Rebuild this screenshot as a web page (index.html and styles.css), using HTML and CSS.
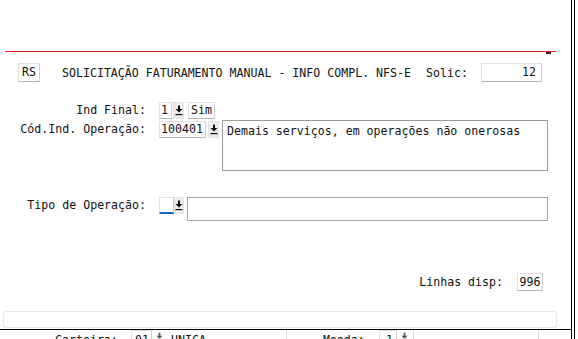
FILE: index.html
```html
<!DOCTYPE html>
<html lang="pt">
<head>
<meta charset="utf-8">
<link rel="stylesheet" href="styles.css">
</head>
<body>
<div class="frame">
  <div class="dialog">
    <div class="redline"></div>
    <div class="header">
      <div class="box rs">RS</div>
      <div class="title">SOLICITAÇÃO FATURAMENTO MANUAL - INFO COMPL. NFS-E</div>
      <div class="lbl solic-lbl">Solic:</div>
      <div class="box solic">12</div>
    </div>

    <div class="row r1">
      <div class="label">Ind Final:</div>
      <div class="box in-1">1</div>
      <div class="dd"><svg viewBox="0 0 8 11" width="8" height="11"><path d="M3 0.5h2v3.5h2.5L4 7.6 0.5 4H3z" fill="#111"/><rect x="0.5" y="9" width="7" height="1.2" fill="#111"/></svg></div>
      <div class="box in-sim">Sim</div>
    </div>

    <div class="row r2">
      <div class="label">Cód.Ind. Operação:</div>
      <div class="box in-cod">100401</div>
      <div class="dd dd2"><svg viewBox="0 0 8 11" width="8" height="11"><path d="M3 0.5h2v3.5h2.5L4 7.6 0.5 4H3z" fill="#111"/><rect x="0.5" y="9" width="7" height="1.2" fill="#111"/></svg></div>
      <div class="area">Demais serviços, em operações não onerosas</div>
    </div>

    <div class="row r3">
      <div class="label">Tipo de Operação:</div>
      <div class="box in-tipo"></div>
      <div class="dd dd3"><svg viewBox="0 0 8 11" width="8" height="11"><path d="M3 0.5h2v3.5h2.5L4 7.6 0.5 4H3z" fill="#111"/><rect x="0.5" y="9" width="7" height="1.2" fill="#111"/></svg></div>
      <div class="textbox"></div>
    </div>

    <div class="linhas">
      <div class="lbl">Linhas disp:</div>
      <div class="box in-linhas">996</div>
    </div>

    <div class="footbox"></div>
  </div>

  <div class="under">
    <div class="u-label">Carteira:</div>
    <div class="box u-01">01</div>
    <div class="u-dd"><svg viewBox="0 0 8 11" width="7" height="10"><path d="M3 0.5h2v3.5h2.5L4 7.6 0.5 4H3z" fill="#555"/><rect x="0.5" y="9" width="7" height="1.2" fill="#555"/></svg></div>
    <div class="u-text">UNICA</div>
    <div class="u-sep"></div>
    <div class="u-label u-moeda">Moeda:</div>
    <div class="box u-1">1</div>
    <div class="u-dd"><svg viewBox="0 0 8 11" width="7" height="10"><path d="M3 0.5h2v3.5h2.5L4 7.6 0.5 4H3z" fill="#555"/><rect x="0.5" y="9" width="7" height="1.2" fill="#555"/></svg></div>
    <div class="u-field"></div>
  </div>
</div>
</body>
</html>
```

FILE: styles.css
```css
html, body {
  margin: 0;
  padding: 0;
  background: #fff;
}
body {
  width: 578px;
  height: 339px;
  overflow: hidden;
  font-family: "DejaVu Sans Mono", "Liberation Mono", monospace;
  font-size: 11.6px;
  color: #111;
}
.frame {
  width: 571px;
  height: 339px;
  border-right: 4px double #000;
  overflow: hidden;
}
.dialog {
  box-sizing: border-box;
  height: 330px;
  border-bottom: 1px solid #000;
  display: flex;
  flex-direction: column;
}
.dialog > * {
  flex-shrink: 0;
}
.redline {
  position: relative;
  margin: 51px 0 0 5px;
  width: 551px;
  height: 1px;
  background: #ee1c1c;
}
.redline::after {
  content: "";
  position: absolute;
  left: 541px;
  top: 1px;
  width: 5px;
  height: 2px;
  background: #223;
}
.box {
  box-sizing: border-box;
  background: #fff;
  border: 1px solid;
  border-color: #e2e2e2 #cfcfcf #b4b4b4 #e2e2e2;
  line-height: 15px;
  white-space: pre;
}
.header {
  display: flex;
  align-items: center;
  height: 19px;
  margin-top: 11px;
  padding-left: 18px;
}
.rs {
  width: 22px;
  height: 19px;
  line-height: 17px;
  text-align: center;
}
.title {
  margin-left: 22px;
  white-space: pre;
}
.solic-lbl {
  margin-left: 15px;
}
.solic {
  margin-left: 13px;
  width: 61px;
  height: 19px;
  line-height: 17px;
  text-align: right;
  padding-right: 5px;
}
.row {
  display: flex;
  align-items: flex-start;
}
.label {
  width: 146px;
  margin-right: 13px;
  text-align: right;
  line-height: 17px;
  white-space: pre;
}
.r1 {
  margin-top: 20px;
  height: 17px;
}
.r2 {
  margin-top: 1px;
}
.r2 .label,
.r2 .in-cod,
.r2 .dd2 {
  margin-top: 1px;
}
.r3 {
  margin-top: 26px;
}
.row .box {
  height: 17px;
  padding: 0 2px;
}
.row .in-1 {
  width: 13px;
  padding: 0 0 0 1px;
}
.dd {
  width: 11px;
  height: 17px;
  margin-left: 1px;
  box-sizing: border-box;
  background: #ececec;
  border: 1px solid #e4e4e4;
  display: flex;
  align-items: center;
  justify-content: center;
}
.in-sim {
  width: 27px;
  margin-left: 4px;
}
.row .in-cod {
  width: 47px;
  padding: 0 1px;
}
.dd2 {
  margin-left: 2px;
}
.area {
  margin-left: 3px;
  width: 326px;
  height: 51px;
  box-sizing: border-box;
  border: 1px solid #9c9c9c;
  padding: 2px 4px;
  line-height: 16px;
  white-space: pre;
}
.row .in-tipo {
  width: 15px;
  border-bottom: 2px solid #1565c0;
}
.dd3 {
  margin-left: 0;
  width: 10px;
}
.textbox {
  margin-left: 3px;
  width: 361px;
  height: 24px;
  box-sizing: border-box;
  border: 1px solid #a6a6a6;
}
.linhas {
  display: flex;
  align-items: center;
  justify-content: flex-end;
  margin-top: 52px;
  height: 18px;
  padding-right: 28px;
}
.linhas .lbl {
  margin-right: 14px;
  white-space: pre;
}
.in-linhas {
  width: 26px;
  height: 18px;
  line-height: 16px;
  text-align: center;
}
.footbox {
  margin: 20px 0 0 3px;
  width: 554px;
  height: 17px;
  box-sizing: border-box;
  border: 1px solid #e6e6e6;
  border-radius: 3px;
}
.under {
  display: flex;
  align-items: flex-start;
  height: 14px;
  padding-left: 55px;
  line-height: 14px;
}
.u-label {
  width: 63px;
  white-space: pre;
  margin-top: 3px;
}
.u-01 {
  margin-left: 13px;
  width: 21px;
  height: 16px;
  padding-left: 3px;
  padding-top: 2px;
  line-height: 14px;
}
.u-dd {
  margin-left: 4px;
  width: 9px;
  padding-top: 1px;
}
.u-text {
  margin-left: 6px;
  margin-top: 3px;
}
.u-sep {
  margin-left: 80px;
  width: 1px;
  height: 14px;
  background: #d8d8d8;
}
.u-moeda {
  margin-left: 36px;
  width: 42px;
}
.u-1 {
  margin-left: 14px;
  width: 18px;
  height: 16px;
  padding-left: 6px;
  padding-top: 2px;
  line-height: 14px;
}
.u-field {
  margin-left: 3px;
  width: 126px;
  height: 14px;
  box-sizing: border-box;
  border-left: 1px solid #d8d8d8;
  border-right: 1px solid #d8d8d8;
}
```
